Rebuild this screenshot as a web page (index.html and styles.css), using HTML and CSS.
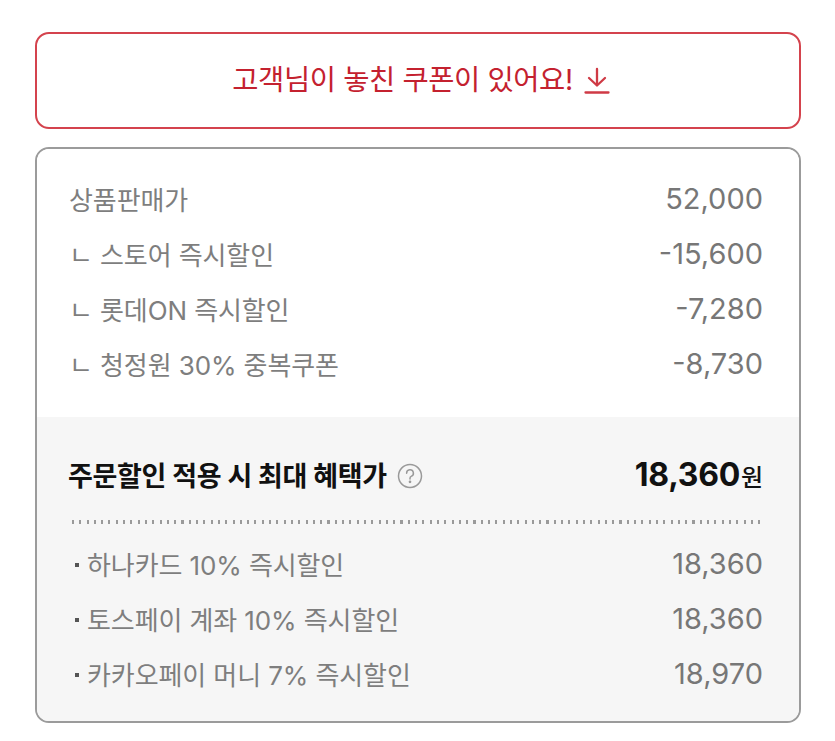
FILE: index.html
```html
<!DOCTYPE html>
<html lang="ko">
<head>
<meta charset="utf-8">
<link rel="stylesheet" href="styles.css">
</head>
<body>
<div class="page">
  <button class="coupon" type="button">
    <span>고객님이 놓친 쿠폰이 있어요!</span>
    <svg class="down" width="26" height="28" viewBox="0 0 26 28" fill="none" stroke="#cf3a45" stroke-width="2.3" stroke-linecap="round" stroke-linejoin="round">
      <path d="M13 2v16"/>
      <path d="M5 11l8 7.5 8-7.5"/>
      <path d="M1.5 25.5h23"/>
    </svg>
  </button>

  <div class="card">
    <div class="prices">
      <div class="row"><span>상품판매가</span><span class="num">52,000</span></div>
      <div class="row"><span>ㄴ 스토어 즉시할인</span><span class="num">-15,600</span></div>
      <div class="row"><span>ㄴ 롯데ON 즉시할인</span><span class="num">-7,280</span></div>
      <div class="row"><span>ㄴ 청정원 30% 중복쿠폰</span><span class="num">-8,730</span></div>
    </div>
    <div class="benefit">
      <div class="title-row">
        <span class="title">주문할인 적용 시 최대 혜택가
          <svg class="help" width="26" height="26" viewBox="0 0 26 26" fill="none" stroke="#9a9a9a" stroke-width="1.5">
            <circle cx="13" cy="13" r="11.5"/>
            <path d="M9.6 10.2a3.4 3.4 0 1 1 4.6 3.2c-.8.4-1.2.9-1.2 1.8v.8" stroke-linecap="round"/>
            <circle cx="13" cy="18.8" r="0.6" fill="#9a9a9a"/>
          </svg>
        </span>
        <span class="total"><b>18,360</b><small>원</small></span>
      </div>
      <div class="dots"></div>
      <div class="row sub"><span><i class="bullet"></i>하나카드 10% 즉시할인</span><span class="num">18,360</span></div>
      <div class="row sub"><span><i class="bullet"></i>토스페이 계좌 10% 즉시할인</span><span class="num">18,360</span></div>
      <div class="row sub"><span><i class="bullet"></i>카카오페이 머니 7% 즉시할인</span><span class="num">18,970</span></div>
    </div>
  </div>
</div>
</body>
</html>
```

FILE: styles.css
```css
* { box-sizing: border-box; }
html, body { margin: 0; padding: 0; background: #fff; }
body {
  font-family: "Inter", "Noto Sans CJK KR", sans-serif;
  -webkit-font-smoothing: antialiased;
}
.page {
  padding: 32px 34px 0 35px;
  display: flex;
  flex-direction: column;
  gap: 18px;
}
.coupon {
  height: 97px;
  width: 100%;
  border: 2px solid #d4434d;
  border-radius: 14px;
  background: #fff;
  display: flex;
  align-items: center;
  justify-content: center;
  gap: 11px;
  font-family: "Inter", "Noto Sans CJK KR", sans-serif;
  font-size: 28.5px;
  color: #c4212f;
  letter-spacing: -0.4px;
  padding: 0 0 0 6px;
}
.coupon span { line-height: 1; }
.down { margin-top: 1px; }
.card {
  border: 2px solid #9b9b9b;
  border-radius: 14px;
  overflow: hidden;
  height: 576px;
  display: flex;
  flex-direction: column;
}
.prices {
  padding: 22px 36px 26px 32px;
  background: #fff;
}
.row {
  height: 55px;
  display: flex;
  align-items: center;
  justify-content: space-between;
  font-size: 26px;
  color: #7e7e7e;
  letter-spacing: -0.1px;
}
.num { font-size: 29px; letter-spacing: 0; color: #777; }
.benefit {
  flex: 1;
  background: #f6f6f6;
  padding: 30px 36px 0 31px;
}
.title-row {
  height: 55px;
  display: flex;
  align-items: center;
  justify-content: space-between;
}
.title {
  font-size: 27px;
  font-weight: 700;
  color: #111;
  letter-spacing: -0.3px;
  display: flex;
  align-items: center;
  gap: 10px;
}
.help { margin-top: 3px; }
.total { display: flex; align-items: baseline; color: #111; }
.total b { font-size: 32px; font-weight: 700; letter-spacing: -0.3px; }
.total small { font-size: 24px; font-weight: 500; margin-left: 1px; }
.dots {
  margin: 18px 0 12px 4px;
  height: 4px;
  background-image: repeating-linear-gradient(to right, #9a9a9a 0 2px, transparent 2px 7.3px);
}
.sub span:first-child { display: flex; align-items: center; }
.bullet {
  width: 4px;
  height: 4px;
  background: #555;
  display: inline-block;
  margin: 2px 8px 0 7px;
}
```
